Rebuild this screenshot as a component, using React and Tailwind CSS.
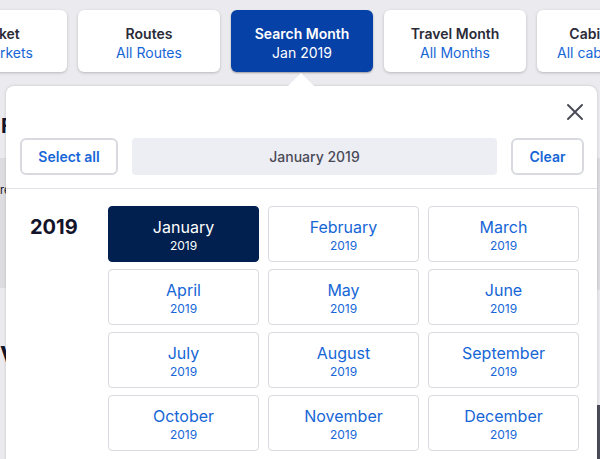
import React from 'react';

const tabs = [
  { title: 'Market', sub: 'All Markets' },
  { title: 'Routes', sub: 'All Routes' },
  { title: 'Search Month', sub: 'Jan 2019', active: true },
  { title: 'Travel Month', sub: 'All Months' },
  { title: 'Cabin', sub: 'All cabins', narrow: true },
];

const months = [
  'January', 'February', 'March', 'April', 'May', 'June',
  'July', 'August', 'September', 'October', 'November', 'December',
];

function Tab({ title, sub, active, narrow }) {
  return (
    <div
      className={
        'flex h-[62px] shrink-0 flex-col items-center justify-center rounded-md pt-[4px] text-[14px] leading-[19px] ' +
        (narrow ? 'w-[104px] ' : 'w-[142px] ') +
        (active
          ? 'bg-[#0641a7] text-white shadow-[0_1px_2px_rgba(0,0,0,0.35)]'
          : 'bg-white shadow-[0_1px_3px_rgba(0,0,0,0.22)]')
      }
    >
      <span className={'whitespace-nowrap font-semibold ' + (active ? 'text-white' : 'text-[#2b2b38]')}>{title}</span>
      <span className={'whitespace-nowrap ' + (active ? 'text-white' : 'text-[#1666d6]')}>{sub}</span>
    </div>
  );
}

function MonthCard({ name, selected }) {
  return (
    <div
      className={
        'flex h-[56px] flex-col items-center justify-center rounded-[4px] border pt-[4px] ' +
        (selected ? 'border-[#01204f] bg-[#01204f] text-white' : 'border-[#d9dae0] bg-white text-[#1666d6]')
      }
    >
      <span className="text-[16px] leading-[19px]">{name}</span>
      <span className="mt-[1px] text-[12px] leading-[16px]">2019</span>
    </div>
  );
}

export default function App() {
  return (
    <div
      className="relative h-[459px] w-[600px] overflow-hidden bg-[#ebebef]"
      style={{ fontFamily: 'Inter, "Noto Sans", sans-serif' }}
    >
      {/* Filter tabs */}
      <div className="ml-[-75px] flex gap-[11px] pt-[10px]">
        {tabs.map((t) => (
          <Tab key={t.title} {...t} />
        ))}
      </div>

      {/* Page content behind the dropdown */}
      <div className="mt-[14px] flex flex-col text-[#14142a]">
        <div className="mt-[30px] pl-[1px] text-[20px] font-bold leading-none">F</div>
        <div className="mt-[22px] h-[130px] bg-[#dcdce1] pt-[24px] text-[11px]">re</div>
        <div className="mt-[50px] text-[24px] font-bold">V</div>
      </div>
      <div className="absolute right-0 top-[176px] h-[114px] w-[4px] bg-[#dcdce1]" />
      <div className="absolute right-0 top-[405px] h-[54px] w-[4px] bg-[#4d4d5a]" />

      {/* Dropdown panel */}
      <div className="absolute left-[6px] top-[86px] h-[400px] w-[591px] rounded-lg bg-white shadow-[0_0_3px_rgba(0,0,0,0.18)]">
        <div className="absolute left-[282px] top-[-13px] h-0 w-0 border-x-[13px] border-b-[13px] border-x-transparent border-b-white" />

        <div className="flex justify-end pr-[13px] pt-[17px]">
          <svg width="18" height="18" viewBox="0 0 18 18" fill="none" stroke="#4b4b57" strokeWidth="2" strokeLinecap="round">
            <path d="M2 2 L16 16 M16 2 L2 16" />
          </svg>
        </div>

        <div className="mt-[17px] flex items-center gap-[14px] px-[14px] pr-[13px]">
          <button className="h-[37px] w-[98px] rounded-md border-2 border-[#d9dae0] bg-white text-[14px] font-semibold text-[#1666d6]">
            Select all
          </button>
          <div className="flex h-[37px] flex-1 items-center justify-center rounded-[4px] bg-[#edeef4] text-[14px] font-medium text-[#4a4a57]">
            January 2019
          </div>
          <button className="h-[37px] w-[73px] rounded-md border-2 border-[#d9dae0] bg-white text-[14px] font-semibold text-[#1666d6]">
            Clear
          </button>
        </div>

        <div className="mt-[13px] border-t border-[#e2e3e8]" />

        <div className="flex pt-[17px] pr-[18px]">
          <div className="w-[102px] shrink-0 pl-[24px] pt-[8px] text-[20px] font-bold leading-[26px] text-[#14142a]">
            2019
          </div>
          <div className="grid flex-1 grid-cols-3 gap-x-[9px] gap-y-[7px]">
            {months.map((m) => (
              <MonthCard key={m} name={m} selected={m === 'January'} />
            ))}
          </div>
        </div>
      </div>
    </div>
  );
}
